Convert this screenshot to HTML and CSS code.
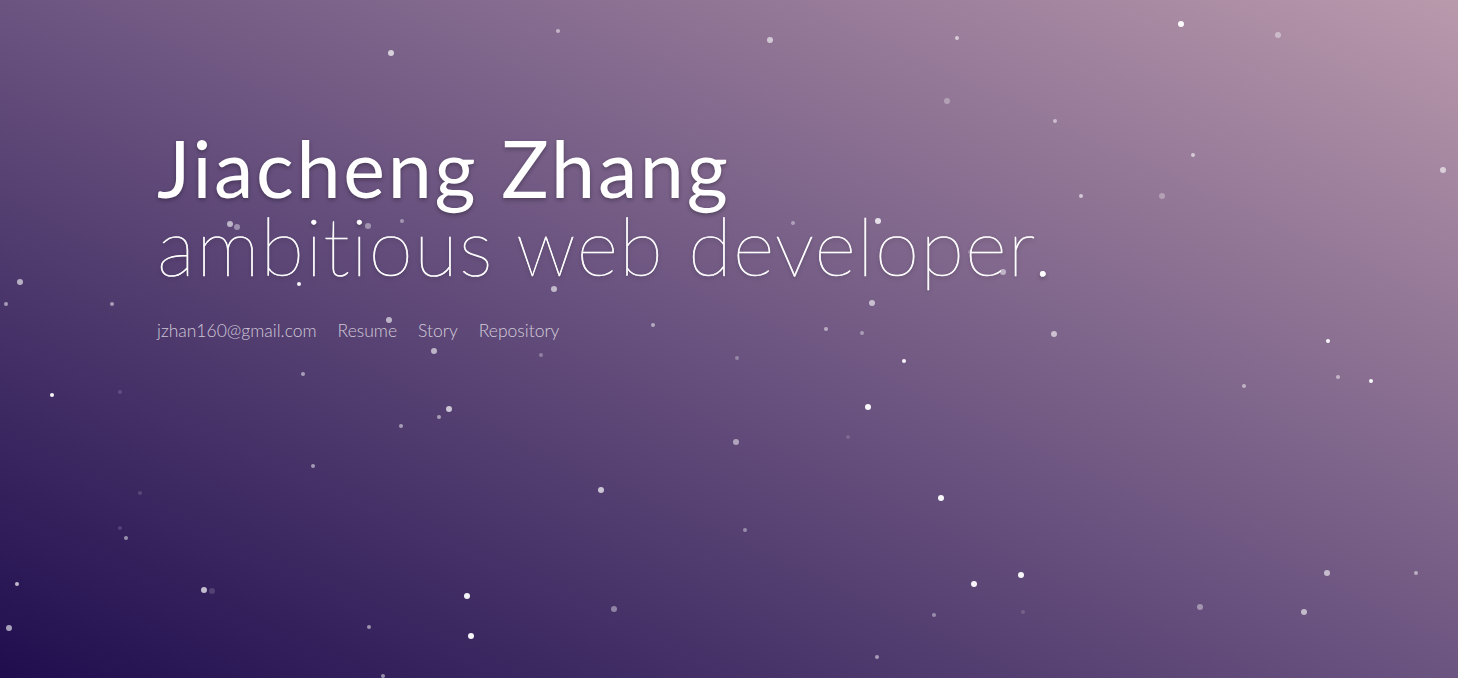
FILE: index.html
```html
<!DOCTYPE html>
<html lang="en">
<head>
<meta charset="utf-8">
<title>Jiacheng Zhang</title>
<link rel="stylesheet" href="styles.css">
</head>
<body>
<div class="page">
  <div class="stars" aria-hidden="true">
    <span class="star s3 o7" style="left:391px;top:53px"></span>
    <span class="star s2 o5" style="left:558px;top:31px"></span>
    <span class="star s3 o6" style="left:770px;top:40px"></span>
    <span class="star s2 o6" style="left:957px;top:38px"></span>
    <span class="star s3 o9" style="left:1181px;top:24px"></span>
    <span class="star s3 o4" style="left:1278px;top:35px"></span>
    <span class="star s3 o3" style="left:947px;top:101px"></span>
    <span class="star s2 o5" style="left:1055px;top:121px"></span>
    <span class="star s2 o6" style="left:1193px;top:155px"></span>
    <span class="star s3 o6" style="left:1443px;top:170px"></span>
    <span class="star s2 o6" style="left:1081px;top:196px"></span>
    <span class="star s3 o3" style="left:1162px;top:196px"></span>
    <span class="star s3 o6" style="left:230px;top:224px"></span>
    <span class="star s3 o4" style="left:237px;top:227px"></span>
    <span class="star s3 o4" style="left:368px;top:226px"></span>
    <span class="star s2 o4" style="left:402px;top:221px"></span>
    <span class="star s3 o8" style="left:878px;top:221px"></span>
    <span class="star s2 o4" style="left:793px;top:223px"></span>
    <span class="star s3 o5" style="left:1003px;top:272px"></span>
    <span class="star s2 o3" style="left:970px;top:252px"></span>
    <span class="star s3 o6" style="left:20px;top:282px"></span>
    <span class="star s2 o5" style="left:6px;top:304px"></span>
    <span class="star s2 o5" style="left:112px;top:304px"></span>
    <span class="star s2 o9" style="left:299px;top:284px"></span>
    <span class="star s3 o6" style="left:554px;top:289px"></span>
    <span class="star s3 o6" style="left:872px;top:303px"></span>
    <span class="star s3 o6" style="left:389px;top:320px"></span>
    <span class="star s2 o5" style="left:653px;top:325px"></span>
    <span class="star s2 o5" style="left:826px;top:329px"></span>
    <span class="star s2 o4" style="left:862px;top:333px"></span>
    <span class="star s3 o6" style="left:1054px;top:334px"></span>
    <span class="star s2 o9" style="left:1328px;top:341px"></span>
    <span class="star s3 o6" style="left:434px;top:351px"></span>
    <span class="star s2 o3" style="left:541px;top:355px"></span>
    <span class="star s2 o3" style="left:737px;top:358px"></span>
    <span class="star s2 o9" style="left:904px;top:361px"></span>
    <span class="star s2 o5" style="left:303px;top:374px"></span>
    <span class="star s2 o5" style="left:1338px;top:377px"></span>
    <span class="star s2 o9" style="left:1371px;top:381px"></span>
    <span class="star s2 o5" style="left:1244px;top:386px"></span>
    <span class="star s2 o9" style="left:52px;top:395px"></span>
    <span class="star s2 o2" style="left:120px;top:392px"></span>
    <span class="star s3 o9" style="left:868px;top:407px"></span>
    <span class="star s3 o7" style="left:449px;top:409px"></span>
    <span class="star s2 o5" style="left:439px;top:417px"></span>
    <span class="star s2 o5" style="left:401px;top:426px"></span>
    <span class="star s3 o5" style="left:736px;top:442px"></span>
    <span class="star s2 o2" style="left:848px;top:437px"></span>
    <span class="star s2 o5" style="left:313px;top:466px"></span>
    <span class="star s3 o7" style="left:601px;top:490px"></span>
    <span class="star s3 o9" style="left:941px;top:498px"></span>
    <span class="star s2 o2" style="left:140px;top:493px"></span>
    <span class="star s2 o2" style="left:120px;top:528px"></span>
    <span class="star s2 o5" style="left:126px;top:538px"></span>
    <span class="star s2 o4" style="left:745px;top:530px"></span>
    <span class="star s2 o7" style="left:17px;top:584px"></span>
    <span class="star s3 o7" style="left:204px;top:590px"></span>
    <span class="star s3 o2" style="left:212px;top:591px"></span>
    <span class="star s3 o9" style="left:467px;top:596px"></span>
    <span class="star s3 o9" style="left:974px;top:584px"></span>
    <span class="star s3 o9" style="left:1021px;top:575px"></span>
    <span class="star s3 o6" style="left:1327px;top:573px"></span>
    <span class="star s2 o5" style="left:1416px;top:573px"></span>
    <span class="star s3 o4" style="left:1200px;top:607px"></span>
    <span class="star s3 o4" style="left:614px;top:609px"></span>
    <span class="star s2 o4" style="left:934px;top:615px"></span>
    <span class="star s2 o2" style="left:1023px;top:612px"></span>
    <span class="star s3 o6" style="left:1304px;top:612px"></span>
    <span class="star s3 o6" style="left:9px;top:628px"></span>
    <span class="star s2 o5" style="left:369px;top:627px"></span>
    <span class="star s3 o9" style="left:471px;top:636px"></span>
    <span class="star s2 o5" style="left:877px;top:657px"></span>
    <span class="star s2 o5" style="left:383px;top:676px"></span>
  </div>
  <header class="hero">
    <h1 class="name">Jiacheng Zhang</h1>
    <p class="tagline">ambitious web developer.</p>
    <nav class="links">
      <a href="#">jzhan160@gmail.com</a>
      <a href="#">Resume</a>
      <a href="#">Story</a>
      <a href="#">Repository</a>
    </nav>
  </header>
</div>
</body>
</html>
```

FILE: styles.css
```css
html, body {
  margin: 0;
  padding: 0;
  height: 100%;
}
body {
  font-family: "Lato", "Open Sans", sans-serif;
  color: #fff;
  overflow: hidden;
}
.page {
  position: relative;
  height: 678px;
  background: linear-gradient(to top right, #1f0d4e 0%, #6b5480 50%, #b999ac 100%);
  overflow: hidden;
}
.stars {
  position: absolute;
  inset: 0;
  pointer-events: none;
}
.star {
  position: absolute;
  border-radius: 50%;
  background: #fff;
  transform: translate(-50%, -50%);
}
.s2 { width: 4px; height: 4px; }
.s3 { width: 6px; height: 6px; }
.o2 { opacity: 0.15; }
.o3 { opacity: 0.3; }
.o4 { opacity: 0.4; }
.o5 { opacity: 0.5; }
.o6 { opacity: 0.6; }
.o7 { opacity: 0.7; }
.o8 { opacity: 0.8; }
.o9 { opacity: 0.95; }
.hero {
  position: relative;
  padding: 130px 0 0 157px;
}
.name {
  margin: 0;
  font-size: 79px;
  font-weight: 400;
  line-height: 76px;
  letter-spacing: 2.7px;
  text-shadow: 0 2px 4px rgba(0, 0, 0, 0.3);
}
.tagline {
  margin: 0;
  font-size: 80px;
  font-weight: 200;
  line-height: 78px;
  letter-spacing: 1.3px;
  -webkit-text-stroke: 0.7px #fff;
  text-shadow: 0 2px 4px rgba(0, 0, 0, 0.35);
}
.links {
  display: flex;
  gap: 21px;
  margin-top: 36px;
}
.links a {
  color: rgba(255, 255, 255, 0.72);
  text-decoration: none;
  font-size: 17.5px;
  font-weight: 300;
  letter-spacing: 0;
}
```
